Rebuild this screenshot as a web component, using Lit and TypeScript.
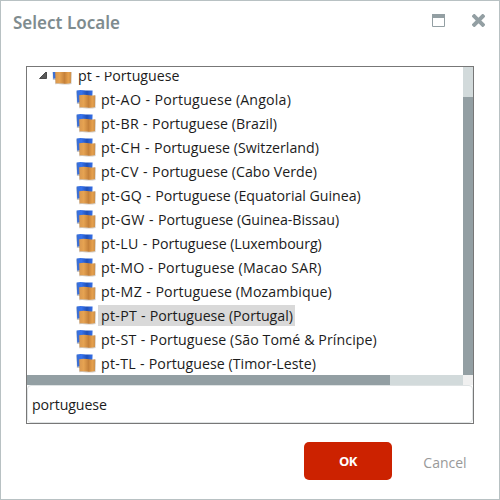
import { LitElement, html, css } from "lit";
import { customElement, state } from "lit/decorators.js";
import { classMap } from "lit/directives/class-map.js";

/* lead and body are the widths in pixels of the code part and of the name part. */
interface Locale { code: string; region: string; lead: number; body: number }

const LOCALES: Locale[] = [
  { code: "pt-AO", region: "Angola", lead: 53.6, body: 136.4 },
  { code: "pt-BR", region: "Brazil", lead: 51.1, body: 124.9 },
  { code: "pt-CH", region: "Switzerland", lead: 53.1, body: 164.9 },
  { code: "pt-CV", region: "Cabo Verde", lead: 51.1, body: 164.9 },
  { code: "pt-GQ", region: "Equatorial Guinea", lead: 54.1, body: 205.6 },
  { code: "pt-GW", region: "Guinea-Bissau", lead: 57.1, body: 180.9 },
  { code: "pt-LU", region: "Luxembourg", lead: 50.6, body: 170.1 },
  { code: "pt-MO", region: "Macao SAR", lead: 56.4, body: 164.3 },
  { code: "pt-MZ", region: "Mozambique", lead: 54.4, body: 176.5 },
  { code: "pt-PT", region: "Portugal", lead: 48.8, body: 143.1 },
  { code: "pt-ST", region: "São Tomé & Príncipe", lead: 48.8, body: 227.1 },
  { code: "pt-TL", region: "Timor-Leste", lead: 47.8, body: 167.1 },
];

@customElement("flag-icon")
export class FlagIcon extends LitElement {
  static styles = css`
    :host { display: block; width: 20px; height: 20px; }
    svg { display: block; }
  `;
  render() {
    return html`<svg width="20" height="20" viewBox="0 0 20 20">
      <defs>
        <linearGradient id="b" x1="0" x2="1" y1="0" y2="0">
          <stop offset="0" stop-color="#3a6ed0" /><stop offset=".3" stop-color="#3672ee" />
          <stop offset=".65" stop-color="#1f50b8" /><stop offset=".88" stop-color="#2f66dc" />
          <stop offset="1" stop-color="#3a70e0" />
        </linearGradient>
        <linearGradient id="o" x1="0" x2="1" y1="0" y2="0">
          <stop offset="0" stop-color="#d99850" /><stop offset=".28" stop-color="#e6a352" />
          <stop offset=".58" stop-color="#c5813a" /><stop offset=".82" stop-color="#e6a04c" />
          <stop offset="1" stop-color="#cb904c" />
        </linearGradient>
      </defs>
      <path d="M.3 2L.9 15H4V6Z" fill="#777" opacity=".4" />
      <path d="M.6 1.6Q3.5.5 7.5 1.2T16.6 1.4L16.2 11H4.5V13L1.2 13.8Z" fill="url(#b)" />
      <path d="M2.8 6.6Q7 5.4 11 6.4T19.7 6.6L19.5 18.9Q15 19.9 11 19.4T3.2 19.2Z" fill="#776655" opacity=".35" />
      <path d="M3.2 6.3Q7 5.3 11 6.1T19.2 6.2L19 18.1Q15 19 11 18.5T3.6 18.3Z" fill="url(#o)" />
    </svg>`;
  }
}

@customElement("app-root")
export class AppRoot extends LitElement {
  @state() private selected = "pt-PT";
  @state() private query = "portuguese";

  static styles = css`
    :host {
      display: flex; flex-direction: column; box-sizing: border-box;
      width: 500px; height: 500px; border: 1px solid #b8c1c3; background: #fff;
      font-family: "Open Sans", "Noto Sans", sans-serif; color: #1c1c1c; overflow: hidden;
    }
    header { display: flex; align-items: center; height: 42px; padding: 0 14px 0 12px; margin-bottom: 23px; }
    h1 { flex: 1; margin: 1px 0 0; font: 600 17px/24px "Noto Sans", sans-serif; color: #7f8c8f; }
    .tool { display: block; margin-top: -3px; }
    .close { margin-left: 27px; }
    .panel { display: flex; flex-direction: column; box-sizing: border-box; width: 448px; height: 358px; margin-left: 25px; border: 1px solid #777; }
    .scroller { display: grid; grid-template-columns: 436px 10px; grid-template-rows: 308px 10px; }
    .view { padding-top: 5px; box-sizing: border-box; height: 308px; }
    .clip { height: 303px; overflow: hidden; }
    .tree { margin-top: -8px; }
    .row { display: flex; height: 24px; padding-left: 48.5px; }
    .row.root { padding-left: 12px; }
    .row flag-icon { margin-top: 1px; }
    .root flag-icon { margin-left: -1px; }
    .arrow { width: 8px; height: 8px; margin: 7px 6px 0 0; }
    .label { height: 21px; line-height: 21px; margin: 1px 0 0 2.5px; padding: 0 2px 0 3px; font-size: 14.2px; white-space: pre; }
    .root .label { margin-left: 3px; }
    .label.selected { background: #d9d9d9; }
    .track { background: #d2dadb; }
    .thumb { background: #939fa3; }
    .v .thumb { height: 278px; margin-top: 30px; }
    .h .thumb { width: 363px; height: 10px; }
    .corner { background: #f0f0f0; }
    input {
      box-sizing: border-box; width: 446px; height: 38px; margin: 0; padding: 0 5px 0 4px; outline: none;
      border: 1px solid #dfe3e4; border-radius: 4px; font: 14.2px "Open Sans", sans-serif; letter-spacing: -0.1px; color: #1c1c1c; background: #fff;
    }
    footer { display: flex; justify-content: flex-end; padding: 18px 16px 0 0; }
    button { font-family: "Open Sans", sans-serif; border: 0; padding: 0; font-size: 14px; height: 38px; }
    .ok { width: 88px; background: #cc2200; color: #fff; border-radius: 5px; font-size: 13px; font-weight: 700; letter-spacing: -0.5px; }
    .cancel { width: 76px; margin-left: 15px; padding-top: 2px; background: none; color: #999; }
  `;

  /* Spreads the letters of each fitted part so that it takes its stated width. */
  protected firstUpdated() {
    this.renderRoot.querySelectorAll<HTMLElement>("[data-width]").forEach((el) => {
      const gap = Number(el.dataset.width) - el.getBoundingClientRect().width;
      el.style.letterSpacing = `${gap / (el.textContent ?? " ").length}px`;
    });
  }

  private row(l: Locale) {
    return html`<div class="row" @click=${() => (this.selected = l.code)}>
      <flag-icon></flag-icon>
      <div class=${classMap({ label: true, selected: l.code === this.selected })}><span data-width=${l.lead}>${l.code} - </span><span data-width=${l.body}>Portuguese (${l.region})</span></div>
    </div>`;
  }

  render() {
    return html`
      <header>
        <h1>Select Locale</h1>
        <svg class="tool" width="13" height="13" viewBox="0 0 13 13">
          <path d="M.5.5H12.5V12.5H.5Z" fill="#fff" stroke="#939fa3" /><path d="M0 0H13V4H0Z" fill="#939fa3" />
        </svg>
        <svg class="tool close" width="13" height="13" viewBox="0 0 13 13">
          <path d="M2.3 2.3L10.7 10.7M10.7 2.3L2.3 10.7" stroke="#939fa3" stroke-width="4" stroke-linecap="square" />
        </svg>
      </header>
      <div class="panel">
        <div class="scroller">
          <div class="view"><div class="clip"><div class="tree">
            <div class="row root">
              <svg class="arrow" viewBox="0 0 8 8"><path d="M7.5 .5V7.5H.5Z" fill="#595959" stroke="#333" stroke-width=".8" /></svg>
              <flag-icon></flag-icon><div class="label"><span data-width="101.5">pt - Portuguese</span></div>
            </div>
            ${LOCALES.map((l) => this.row(l))}
          </div></div></div>
          <div class="track v"><div class="thumb"></div></div>
          <div class="track h"><div class="thumb"></div></div>
          <div class="corner"></div>
        </div>
        <input .value=${this.query} @input=${(e: Event) => (this.query = (e.target as HTMLInputElement).value)} />
      </div>
      <footer><button class="ok">OK</button><button class="cancel">Cancel</button></footer>
    `;
  }
}
